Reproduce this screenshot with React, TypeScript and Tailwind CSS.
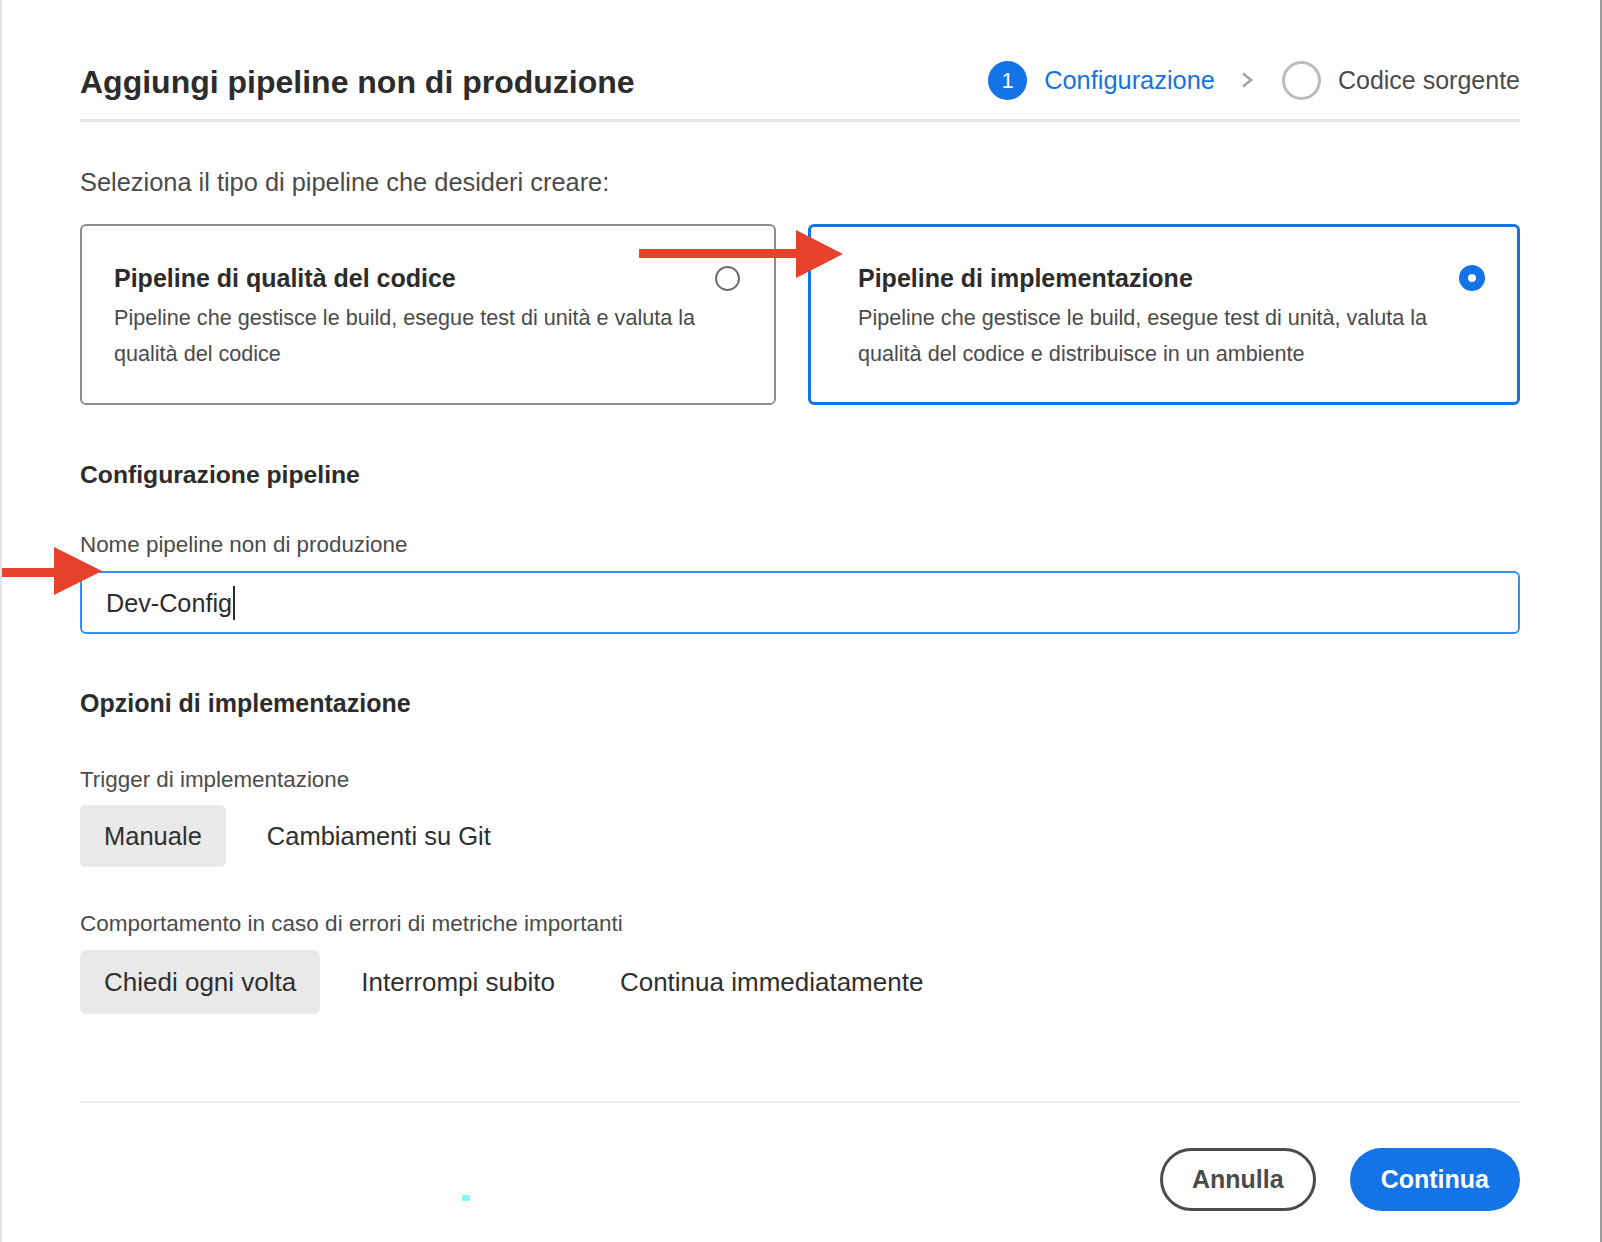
import { useState } from "react";

type Opt = { label: string };

const triggers: Opt[] = [{ label: "Manuale" }, { label: "Cambiamenti su Git" }];
const behaviours: Opt[] = [
  { label: "Chiedi ogni volta" },
  { label: "Interrompi subito" },
  { label: "Continua immediatamente" },
];

function Toggle({ items, selected, onPick, cls }: { items: Opt[]; selected: number; onPick: (i: number) => void; cls: string }) {
  return (
    <div className="flex gap-[17px]">
      {items.map((it, i) => (
        <button
          key={it.label}
          onClick={() => onPick(i)}
          className={
            (i === selected ? "bg-[#e9e9e9] " : "bg-transparent ") +
            cls +
            " px-[24px] rounded-[6px] text-[#2f2f2f] leading-[30px] flex items-center"
          }
        >
          {it.label}
        </button>
      ))}
    </div>
  );
}

export default function App() {
  const [type, setType] = useState(1);
  const [trigger, setTrigger] = useState(0);
  const [behaviour, setBehaviour] = useState(0);

  return (
    <div className="relative w-[1602px] h-[1242px] bg-white border-l-2 border-r-2 border-l-[#e4e4e4] border-r-[#9c9c9c] font-['Liberation_Sans',Arial,sans-serif] overflow-hidden">
      <div className="pl-[78px] pt-[59px] w-[1518px]">
        {/* header */}
        <div className="flex items-center justify-between">
          <h1 className="pt-[4px] text-[32px] leading-[38px] font-bold text-[#2c2c2c]">Aggiungi pipeline non di produzione</h1>
          <div className="flex items-center">
            <div className="w-[39px] h-[39px] rounded-full bg-[#1473e6] text-white text-[22px] flex items-center justify-center">1</div>
            <span className="ml-[17px] text-[25.4px] leading-[30px] text-[#1473e6]">Configurazione</span>
            <svg className="ml-[26px]" width="12" height="16" viewBox="0 0 12 16">
              <polyline points="2,1.5 10,8 2,14.5" fill="none" stroke="#a3a3a3" strokeWidth="2.5" />
            </svg>
            <div className="ml-[29px] w-[39px] h-[39px] rounded-full border-[3px] border-[#bcbcbc]" />
            <span className="ml-[17px] text-[25px] leading-[30px] text-[#4b4b4b]">Codice sorgente</span>
          </div>
        </div>
        <div className="mt-[18px] h-[3px] bg-[#e5e5e5]" />

        <p className="mt-[45px] text-[25.4px] leading-[30px] text-[#4b4b4b]">Seleziona il tipo di pipeline che desideri creare:</p>

        {/* pipeline type cards */}
        <div className="mt-[27px] flex gap-[32px]">
          <div
            onClick={() => setType(0)}
            className={
              "w-[696px] h-[181px] rounded-[6px] pl-[32px] pr-[34px] pt-[37px] " +
              (type === 0 ? "border-[3px] border-[#1473e6]" : "border-2 border-[#8e8e8e]")
            }
          >
            <div className="flex items-center justify-between">
              <span className="text-[25px] leading-[30px] font-bold text-[#2c2c2c]">Pipeline di qualità del codice</span>
              {type === 0 ? (
                <div className="w-[26px] h-[26px] rounded-full border-[9px] border-[#1473e6] bg-white" />
              ) : (
                <div className="w-[25px] h-[25px] rounded-full border-2 border-[#6e6e6e]" />
              )}
            </div>
            <p className="mt-[7px] text-[21.6px] leading-[36px] text-[#4b4b4b]">
              Pipeline che gestisce le build, esegue test di unità e valuta la qualità del codice
            </p>
          </div>
          <div
            onClick={() => setType(1)}
            className={
              "flex-1 h-[181px] rounded-[6px] pl-[47px] pr-[32px] pt-[36px] " +
              (type === 1 ? "border-[3px] border-[#1473e6]" : "border-2 border-[#8e8e8e]")
            }
          >
            <div className="flex items-center justify-between">
              <span className="text-[25px] leading-[30px] font-bold text-[#2c2c2c]">Pipeline di implementazione</span>
              {type === 1 ? (
                <div className="w-[26px] h-[26px] rounded-full border-[9px] border-[#1473e6] bg-white" />
              ) : (
                <div className="w-[25px] h-[25px] rounded-full border-2 border-[#6e6e6e]" />
              )}
            </div>
            <p className="mt-[7px] text-[21.6px] leading-[36px] text-[#4b4b4b]">
              Pipeline che gestisce le build, esegue test di unità, valuta la qualità del codice e distribuisce in un ambiente
            </p>
          </div>
        </div>

        {/* configurazione */}
        <h2 className="mt-[55px] text-[24.7px] leading-[30px] font-bold text-[#2c2c2c]">Configurazione pipeline</h2>
        <label className="block mt-[41px] text-[22.4px] leading-[28px] text-[#4b4b4b]">Nome pipeline non di produzione</label>
        <div className="mt-[12px] h-[63px] rounded-[6px] border-2 border-[#378ef0] pl-[24px] flex items-center">
          <span className="text-[25.2px] leading-[30px] text-[#2c2c2c]">Dev-Config</span>
          <span className="ml-[1px] w-[2px] h-[34px] bg-[#2c2c2c]" />
        </div>

        {/* opzioni */}
        <h2 className="mt-[54px] text-[25px] leading-[30px] font-bold text-[#2c2c2c]">Opzioni di implementazione</h2>
        <p className="mt-[48px] text-[22.4px] leading-[28px] text-[#4b4b4b]">Trigger di implementazione</p>
        <div className="mt-[11px]">
          <Toggle items={triggers} selected={trigger} onPick={setTrigger} cls="h-[62px] text-[25.5px]" />
        </div>
        <p className="mt-[43px] text-[22.5px] leading-[28px] text-[#4b4b4b]">Comportamento in caso di errori di metriche importanti</p>
        <div className="mt-[12px]">
          <Toggle items={behaviours} selected={behaviour} onPick={setBehaviour} cls="h-[64px] text-[26px]" />
        </div>

        {/* footer */}
        <div className="mt-[87px] h-[2px] bg-[#ececec]" />
        <div className="mt-[45px] flex justify-end gap-[34px]">
          <button className="h-[63px] px-[29px] rounded-full border-[3px] border-[#4b4b4b] text-[25px] font-bold text-[#4b4b4b]">Annulla</button>
          <button className="h-[63px] px-[31px] rounded-full bg-[#1473e6] text-[25px] font-bold text-white">Continua</button>
        </div>
      </div>

      {/* annotation arrows */}
      <svg className="absolute left-[637px] top-[228px]" width="206" height="52" viewBox="0 0 206 52">
        <rect x="0" y="21" width="160" height="9" fill="#e8412c" />
        <polygon points="157,2 204,26 157,50" fill="#e8412c" />
      </svg>
      <svg className="absolute left-[-2px] top-[545px]" width="104" height="52" viewBox="0 0 104 52">
        <rect x="0" y="23" width="58" height="9" fill="#e8412c" />
        <polygon points="54,2 102,26 54,50" fill="#e8412c" />
      </svg>
      <div className="absolute left-[460px] top-[1195px] w-[8px] h-[6px] bg-[#7ffcff]" />
    </div>
  );
}
